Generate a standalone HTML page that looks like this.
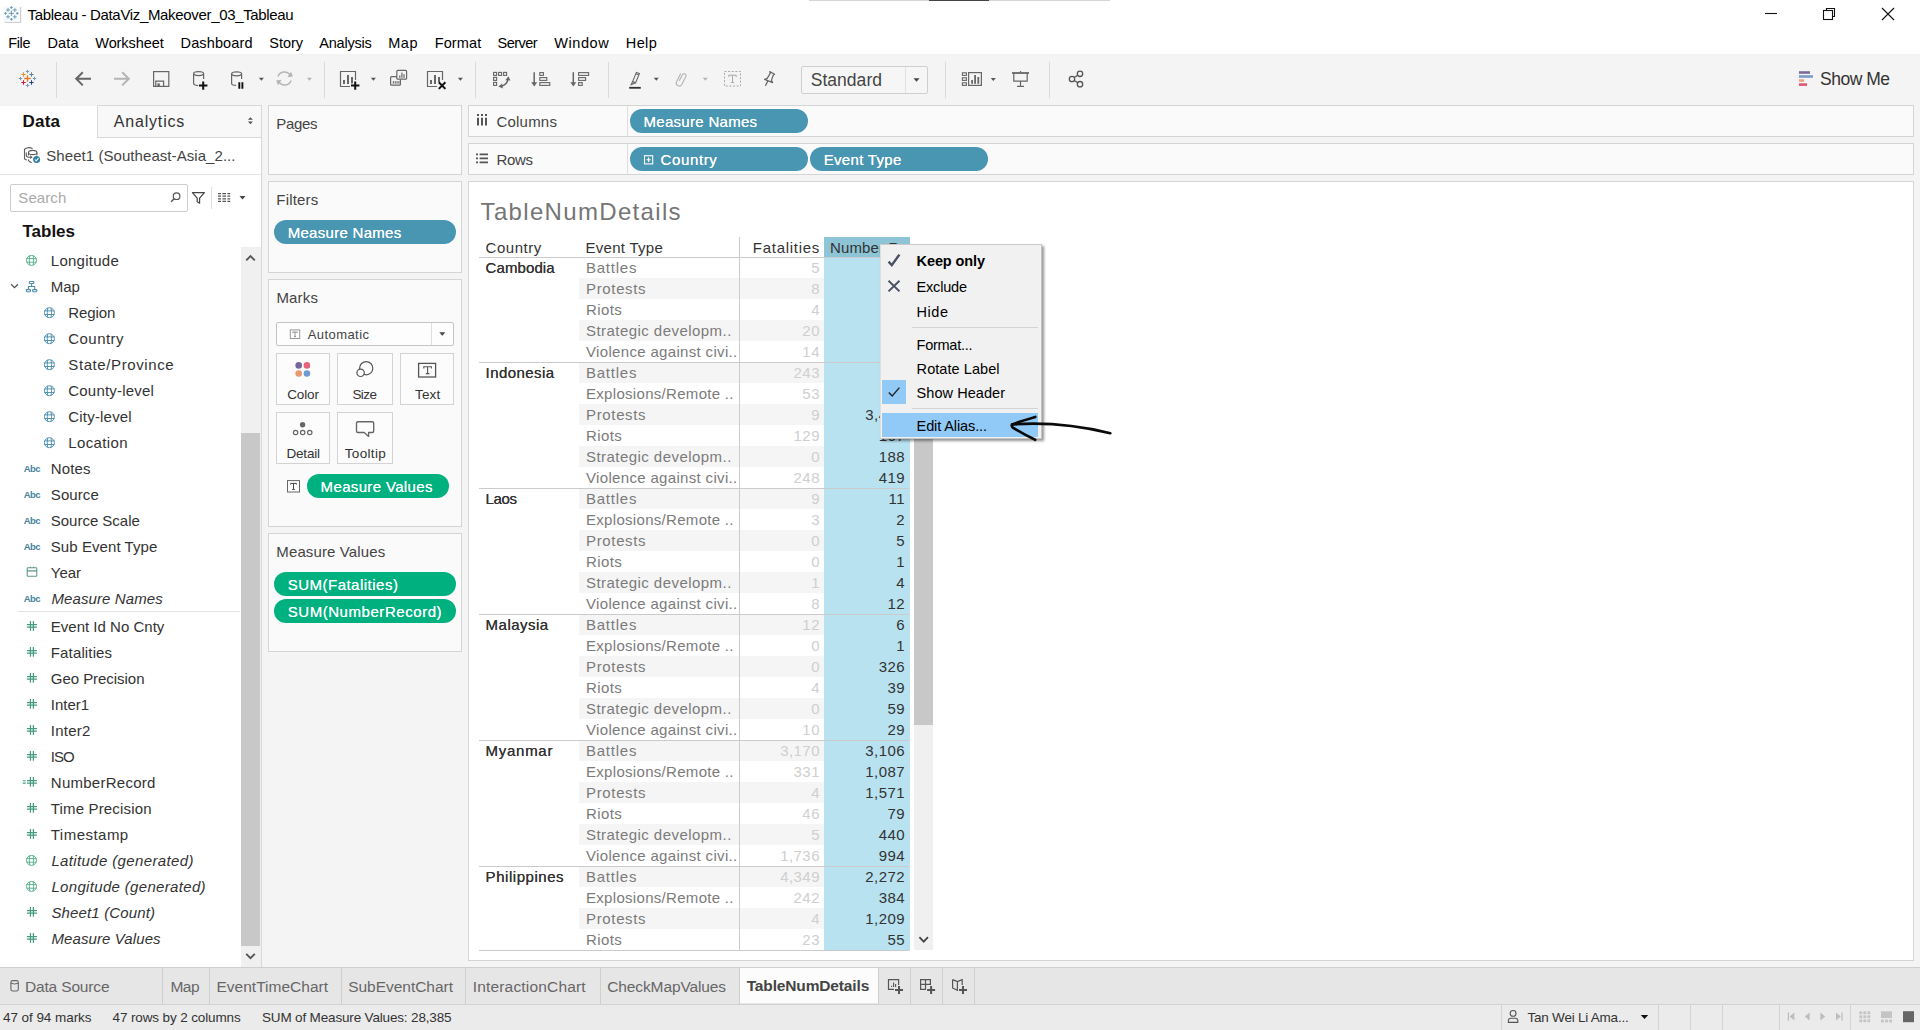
<!DOCTYPE html><html><head><meta charset="utf-8"><title>Tableau - DataViz_Makeover_03_Tableau</title><style>
*{box-sizing:border-box;margin:0;padding:0}
html,body{width:1920px;height:1030px;overflow:hidden;background:#fff}
body{font-family:"Liberation Sans",sans-serif;color:#333;position:relative;font-size:15px}
.a{position:absolute;white-space:nowrap}
.t{position:absolute;white-space:nowrap;line-height:20px;height:20px}
.card{position:absolute;background:#fafafa;border:1px solid #d4d4d4}
.pill{position:absolute;border-radius:12px}
.blue{background:#4996b2}
.green{background:#00b180}
.sep{position:absolute;width:1px;background:#dcdcdc}
svg{position:absolute;overflow:visible}
</style></head><body>
<div class="a" style="left:809px;top:0px;width:301px;height:1px;background:#d6d6d6;"></div>
<div class="a" style="left:929px;top:0px;width:60px;height:1px;background:#444;"></div>
<div class="t" style="left:27.50px;top:5px;font-size:15px;color:#000;letter-spacing:-0.334px;">Tableau - DataViz_Makeover_03_Tableau</div>
<div class="t" style="left:8.30px;top:33px;font-size:14.5px;color:#000;letter-spacing:-0.388px;">File</div>
<div class="t" style="left:47.50px;top:33px;font-size:14.5px;color:#000;letter-spacing:0.124px;">Data</div>
<div class="t" style="left:95.30px;top:33px;font-size:14.5px;color:#000;letter-spacing:-0.080px;">Worksheet</div>
<div class="t" style="left:180.60px;top:33px;font-size:14.5px;color:#000;letter-spacing:0.121px;">Dashboard</div>
<div class="t" style="left:269.30px;top:33px;font-size:14.5px;color:#000;letter-spacing:-0.036px;">Story</div>
<div class="t" style="left:319.30px;top:33px;font-size:14.5px;color:#000;letter-spacing:-0.228px;">Analysis</div>
<div class="t" style="left:388.30px;top:33px;font-size:14.5px;color:#000;letter-spacing:0.496px;">Map</div>
<div class="t" style="left:434.70px;top:33px;font-size:14.5px;color:#000;letter-spacing:0.116px;">Format</div>
<div class="t" style="left:497.50px;top:33px;font-size:14.5px;color:#000;letter-spacing:-0.541px;">Server</div>
<div class="t" style="left:554.20px;top:33px;font-size:14.5px;color:#000;letter-spacing:0.586px;">Window</div>
<div class="t" style="left:625.80px;top:33px;font-size:14.5px;color:#000;letter-spacing:0.359px;">Help</div>
<div class="a" style="left:0px;top:54px;width:1920px;height:976px;background:#f4f4f4;"></div>
<div class="a" style="left:56px;top:62px;width:1px;height:36px;background:#dadada;"></div>
<div class="a" style="left:324px;top:62px;width:1px;height:36px;background:#dadada;"></div>
<div class="a" style="left:475px;top:62px;width:1px;height:36px;background:#dadada;"></div>
<div class="a" style="left:608px;top:62px;width:1px;height:36px;background:#dadada;"></div>
<div class="a" style="left:945px;top:62px;width:1px;height:36px;background:#dadada;"></div>
<div class="a" style="left:1049px;top:62px;width:1px;height:36px;background:#dadada;"></div>
<div class="a" style="left:801px;top:66px;width:127px;height:28px;background:#f6f6f6;border:1px solid #cfcfcf;border-radius:2px;"></div>
<div class="a" style="left:905px;top:67px;width:1px;height:26px;background:#e2e2e2;"></div>
<div class="t" style="left:810.70px;top:70px;font-size:17.5px;color:#444;letter-spacing:0.039px;">Standard</div>
<div class="t" style="left:1820.00px;top:69px;font-size:17.5px;color:#333;letter-spacing:-0.491px;">Show Me</div>
<div class="a" style="left:0px;top:105.5px;width:262px;height:861.5px;background:#fff;border-right:1px solid #d8d8d8;"></div>
<div class="a" style="left:97px;top:105px;width:165px;height:33px;background:#f8f8f8;border:1px solid #d8d8d8;"></div>
<div class="t" style="left:22.50px;top:112px;font-size:17px;color:#111;font-weight:bold;letter-spacing:0.218px;">Data</div>
<div class="t" style="left:113.80px;top:112px;font-size:16px;color:#333;letter-spacing:0.810px;">Analytics</div>
<div class="t" style="left:46.30px;top:146px;font-size:15px;color:#444;letter-spacing:0.061px;">Sheet1 (Southeast-Asia_2...</div>
<div class="a" style="left:0px;top:174px;width:261px;height:1px;background:#e4e4e4;"></div>
<div class="a" style="left:10px;top:184px;width:178px;height:28px;background:#fff;border:1px solid #cdcdcd;border-radius:2px;"></div>
<div class="t" style="left:18.30px;top:188px;font-size:15px;color:#aaa;letter-spacing:0.095px;">Search</div>
<div class="a" style="left:211px;top:187px;width:1px;height:22px;background:#dedede;"></div>
<div class="t" style="left:22.50px;top:222px;font-size:17px;color:#111;font-weight:bold;letter-spacing:-0.019px;">Tables</div>
<div class="a" style="left:18px;top:611px;width:222px;height:1px;background:#e2e2e2;"></div>
<div class="t" style="left:50.80px;top:251px;font-size:15px;color:#333;letter-spacing:0.263px;">Longitude</div>
<div class="t" style="left:50.80px;top:277px;font-size:15px;color:#333;letter-spacing:-0.090px;">Map</div>
<div class="t" style="left:68.30px;top:303px;font-size:15px;color:#333;letter-spacing:-0.087px;">Region</div>
<div class="t" style="left:68.30px;top:329px;font-size:15px;color:#333;letter-spacing:0.446px;">Country</div>
<div class="t" style="left:68.30px;top:355px;font-size:15px;color:#333;letter-spacing:0.596px;">State/Province</div>
<div class="t" style="left:68.30px;top:381px;font-size:15px;color:#333;letter-spacing:0.193px;">County-level</div>
<div class="t" style="left:68.30px;top:407px;font-size:15px;color:#333;letter-spacing:0.191px;">City-level</div>
<div class="t" style="left:68.30px;top:433px;font-size:15px;color:#333;letter-spacing:0.355px;">Location</div>
<div class="t" style="left:50.80px;top:459px;font-size:15px;color:#333;letter-spacing:0.104px;">Notes</div>
<div class="t" style="left:50.80px;top:485px;font-size:15px;color:#333;letter-spacing:0.095px;">Source</div>
<div class="t" style="left:50.80px;top:511px;font-size:15px;color:#333;letter-spacing:-0.020px;">Source Scale</div>
<div class="t" style="left:50.80px;top:537px;font-size:15px;color:#333;letter-spacing:0.067px;">Sub Event Type</div>
<div class="t" style="left:50.80px;top:563px;font-size:15px;color:#333;">Year</div>
<div class="t" style="left:51.40px;top:589px;font-size:15px;color:#333;font-style:italic;letter-spacing:0.113px;">Measure Names</div>
<div class="t" style="left:50.80px;top:617px;font-size:15px;color:#333;letter-spacing:0.008px;">Event Id No Cnty</div>
<div class="t" style="left:50.80px;top:643px;font-size:15px;color:#333;letter-spacing:0.142px;">Fatalities</div>
<div class="t" style="left:50.80px;top:669px;font-size:15px;color:#333;letter-spacing:-0.043px;">Geo Precision</div>
<div class="t" style="left:50.80px;top:695px;font-size:15px;color:#333;letter-spacing:-0.031px;">Inter1</div>
<div class="t" style="left:50.80px;top:721px;font-size:15px;color:#333;letter-spacing:0.249px;">Inter2</div>
<div class="t" style="left:50.80px;top:747px;font-size:15px;color:#333;letter-spacing:-1.020px;">ISO</div>
<div class="t" style="left:50.80px;top:773px;font-size:15px;color:#333;letter-spacing:0.263px;">NumberRecord</div>
<div class="t" style="left:50.80px;top:799px;font-size:15px;color:#333;letter-spacing:0.159px;">Time Precision</div>
<div class="t" style="left:50.80px;top:825px;font-size:15px;color:#333;letter-spacing:0.472px;">Timestamp</div>
<div class="t" style="left:51.40px;top:851px;font-size:15px;color:#333;font-style:italic;letter-spacing:0.369px;">Latitude (generated)</div>
<div class="t" style="left:51.40px;top:877px;font-size:15px;color:#333;font-style:italic;letter-spacing:0.329px;">Longitude (generated)</div>
<div class="t" style="left:51.40px;top:903px;font-size:15px;color:#333;font-style:italic;letter-spacing:0.152px;">Sheet1 (Count)</div>
<div class="t" style="left:51.40px;top:929px;font-size:15px;color:#333;font-style:italic;letter-spacing:0.105px;">Measure Values</div>
<div class="a" style="left:241px;top:247px;width:20px;height:720px;background:#f0f0f0;"></div>
<div class="a" style="left:241px;top:433px;width:19px;height:513px;background:#c8c8c8;"></div>
<div class="card" style="left:268px;top:105px;width:194px;height:70px"></div>
<div class="t" style="left:276.30px;top:114px;font-size:15px;color:#444;letter-spacing:-0.308px;">Pages</div>
<div class="card" style="left:268px;top:181px;width:194px;height:92px"></div>
<div class="t" style="left:276.30px;top:190px;font-size:15px;color:#444;letter-spacing:0.195px;">Filters</div>
<div class="pill blue" style="left:274px;top:220px;width:181.8px;height:24px"></div>
<div class="t" style="left:287.70px;top:223px;font-size:15px;color:#fff;letter-spacing:0.288px;text-shadow:0 0 0.6px #fff;">Measure Names</div>
<div class="card" style="left:268px;top:279px;width:194px;height:248px"></div>
<div class="t" style="left:276.40px;top:288px;font-size:15px;color:#444;letter-spacing:0.192px;">Marks</div>
<div class="a" style="left:276px;top:322px;width:178px;height:24px;background:#fdfdfd;border:1px solid #c4c4c4;border-radius:2px;"></div>
<div class="a" style="left:431px;top:323px;width:1px;height:22px;background:#dedede;"></div>
<div class="t" style="left:307.70px;top:325px;font-size:13px;color:#444;letter-spacing:0.437px;">Automatic</div>
<div class="a" style="left:276px;top:353px;width:54px;height:52px;background:#fcfcfc;border:1px solid #d3d3d3;"></div>
<div class="t" style="left:287.20px;top:385px;font-size:13.5px;color:#333;letter-spacing:-0.115px;">Color</div>
<div class="a" style="left:337px;top:353px;width:56px;height:52px;background:#fcfcfc;border:1px solid #d3d3d3;"></div>
<div class="t" style="left:352.40px;top:385px;font-size:13.5px;color:#333;letter-spacing:-0.587px;">Size</div>
<div class="a" style="left:400px;top:353px;width:54px;height:52px;background:#fcfcfc;border:1px solid #d3d3d3;"></div>
<div class="t" style="left:415.00px;top:385px;font-size:13.5px;color:#333;letter-spacing:0.147px;">Text</div>
<div class="a" style="left:276px;top:412px;width:54px;height:52px;background:#fcfcfc;border:1px solid #d3d3d3;"></div>
<div class="t" style="left:286.50px;top:444px;font-size:13.5px;color:#333;letter-spacing:-0.203px;">Detail</div>
<div class="a" style="left:337px;top:412px;width:56px;height:52px;background:#fcfcfc;border:1px solid #d3d3d3;"></div>
<div class="t" style="left:344.80px;top:444px;font-size:13.5px;color:#333;letter-spacing:0.313px;">Tooltip</div>
<div class="pill green" style="left:307px;top:474.4px;width:142.3px;height:23.5px"></div>
<div class="t" style="left:320.60px;top:477px;font-size:15px;color:#fff;letter-spacing:0.348px;text-shadow:0 0 0.6px #fff;">Measure Values</div>
<div class="card" style="left:268px;top:533px;width:194px;height:119px"></div>
<div class="t" style="left:276.30px;top:542px;font-size:15px;color:#444;letter-spacing:0.125px;">Measure Values</div>
<div class="pill green" style="left:274px;top:572px;width:181.8px;height:24px"></div>
<div class="t" style="left:287.70px;top:575px;font-size:15px;color:#fff;letter-spacing:0.490px;text-shadow:0 0 0.6px #fff;">SUM(Fatalities)</div>
<div class="pill green" style="left:274px;top:599px;width:181.8px;height:24px"></div>
<div class="t" style="left:287.70px;top:602px;font-size:15px;color:#fff;letter-spacing:0.554px;text-shadow:0 0 0.6px #fff;">SUM(NumberRecord)</div>
<div class="card" style="left:468px;top:105px;width:1446px;height:32px"></div>
<div class="card" style="left:468px;top:143px;width:1446px;height:32px"></div>
<div class="a" style="left:627px;top:106px;width:1px;height:30px;background:#dedede;"></div>
<div class="a" style="left:627px;top:144px;width:1px;height:30px;background:#dedede;"></div>
<div class="t" style="left:496.50px;top:112px;font-size:15px;color:#444;letter-spacing:0.202px;">Columns</div>
<div class="t" style="left:496.50px;top:150px;font-size:15px;color:#444;letter-spacing:-0.369px;">Rows</div>
<div class="pill blue" style="left:630px;top:109px;width:178px;height:24px"></div>
<div class="t" style="left:643.50px;top:112px;font-size:15px;color:#fff;letter-spacing:0.297px;text-shadow:0 0 0.6px #fff;">Measure Names</div>
<div class="pill blue" style="left:630px;top:147.3px;width:178px;height:24px"></div>
<div class="t" style="left:660.60px;top:150px;font-size:15px;color:#fff;letter-spacing:0.613px;text-shadow:0 0 0.6px #fff;">Country</div>
<div class="pill blue" style="left:810px;top:147.3px;width:178px;height:24px"></div>
<div class="t" style="left:823.70px;top:150px;font-size:15px;color:#fff;letter-spacing:0.314px;text-shadow:0 0 0.6px #fff;">Event Type</div>
<div class="a" style="left:468px;top:181px;width:1446px;height:780px;background:#fff;border:1px solid #d4d4d4;"></div>
<div class="t" style="left:480.60px;top:202px;font-size:24px;color:#757575;letter-spacing:1.328px;">TableNumDetails</div>
<div class="a" style="left:824px;top:237px;width:85.6px;height:714px;background:#b9e2f1;"></div>
<div class="a" style="left:824px;top:237px;width:85.6px;height:21px;background:#8dc4d6;"></div>
<div class="t" style="left:485.60px;top:258px;font-size:15px;color:#333;letter-spacing:0.090px;text-shadow:0 0 0.2px #333;">Cambodia</div>
<div class="t" style="left:586.00px;top:258px;font-size:15px;color:#7b7b7b;letter-spacing:0.757px;">Battles</div>
<div class="t" style="right:1100.05px;top:258px;font-size:15px;color:#cfcfcf;letter-spacing:0.450px;">5</div>
<div class="a" style="left:579px;top:278.25px;width:245px;height:20.6px;background:#f5f5f5;"></div>
<div class="t" style="left:586.00px;top:279px;font-size:15px;color:#7b7b7b;letter-spacing:0.654px;">Protests</div>
<div class="t" style="right:1100.05px;top:279px;font-size:15px;color:#cfcfcf;letter-spacing:0.450px;">8</div>
<div class="t" style="left:586.00px;top:300px;font-size:15px;color:#7b7b7b;letter-spacing:0.381px;">Riots</div>
<div class="t" style="right:1100.05px;top:300px;font-size:15px;color:#cfcfcf;letter-spacing:0.450px;">4</div>
<div class="a" style="left:579px;top:320.25px;width:245px;height:20.6px;background:#f5f5f5;"></div>
<div class="t" style="left:586.00px;top:321px;font-size:15px;color:#7b7b7b;letter-spacing:0.451px;">Strategic developm..</div>
<div class="t" style="right:1100.05px;top:321px;font-size:15px;color:#cfcfcf;letter-spacing:0.450px;">20</div>
<div class="t" style="left:586.00px;top:342px;font-size:15px;color:#7b7b7b;letter-spacing:0.329px;">Violence against civi..</div>
<div class="t" style="right:1100.05px;top:342px;font-size:15px;color:#cfcfcf;letter-spacing:0.450px;">14</div>
<div class="t" style="left:485.60px;top:363px;font-size:15px;color:#333;letter-spacing:0.431px;text-shadow:0 0 0.2px #333;">Indonesia</div>
<div class="a" style="left:579px;top:362.25px;width:245px;height:20.6px;background:#f5f5f5;"></div>
<div class="t" style="left:586.00px;top:363px;font-size:15px;color:#7b7b7b;letter-spacing:0.757px;">Battles</div>
<div class="t" style="right:1100.05px;top:363px;font-size:15px;color:#cfcfcf;letter-spacing:0.450px;">243</div>
<div class="t" style="left:586.00px;top:384px;font-size:15px;color:#7b7b7b;letter-spacing:0.304px;">Explosions/Remote ..</div>
<div class="t" style="right:1100.05px;top:384px;font-size:15px;color:#cfcfcf;letter-spacing:0.450px;">53</div>
<div class="a" style="left:579px;top:404.25px;width:245px;height:20.6px;background:#f5f5f5;"></div>
<div class="t" style="left:586.00px;top:405px;font-size:15px;color:#7b7b7b;letter-spacing:0.654px;">Protests</div>
<div class="t" style="right:1100.05px;top:405px;font-size:15px;color:#cfcfcf;letter-spacing:0.450px;">9</div>
<div class="t" style="right:1014.95px;top:405px;font-size:15px;color:#333;letter-spacing:0.450px;">3,467</div>
<div class="t" style="left:586.00px;top:426px;font-size:15px;color:#7b7b7b;letter-spacing:0.381px;">Riots</div>
<div class="t" style="right:1100.05px;top:426px;font-size:15px;color:#cfcfcf;letter-spacing:0.450px;">129</div>
<div class="t" style="right:1014.95px;top:426px;font-size:15px;color:#333;letter-spacing:0.450px;">167</div>
<div class="a" style="left:579px;top:446.25px;width:245px;height:20.6px;background:#f5f5f5;"></div>
<div class="t" style="left:586.00px;top:447px;font-size:15px;color:#7b7b7b;letter-spacing:0.451px;">Strategic developm..</div>
<div class="t" style="right:1100.05px;top:447px;font-size:15px;color:#cfcfcf;letter-spacing:0.450px;">0</div>
<div class="t" style="right:1014.95px;top:447px;font-size:15px;color:#333;letter-spacing:0.450px;">188</div>
<div class="t" style="left:586.00px;top:468px;font-size:15px;color:#7b7b7b;letter-spacing:0.329px;">Violence against civi..</div>
<div class="t" style="right:1100.05px;top:468px;font-size:15px;color:#cfcfcf;letter-spacing:0.450px;">248</div>
<div class="t" style="right:1014.95px;top:468px;font-size:15px;color:#333;letter-spacing:0.450px;">419</div>
<div class="t" style="left:485.60px;top:489px;font-size:15px;color:#333;letter-spacing:-0.342px;text-shadow:0 0 0.2px #333;">Laos</div>
<div class="a" style="left:579px;top:488.25px;width:245px;height:20.6px;background:#f5f5f5;"></div>
<div class="t" style="left:586.00px;top:489px;font-size:15px;color:#7b7b7b;letter-spacing:0.757px;">Battles</div>
<div class="t" style="right:1100.05px;top:489px;font-size:15px;color:#cfcfcf;letter-spacing:0.450px;">9</div>
<div class="t" style="right:1014.95px;top:489px;font-size:15px;color:#333;letter-spacing:0.450px;">11</div>
<div class="t" style="left:586.00px;top:510px;font-size:15px;color:#7b7b7b;letter-spacing:0.304px;">Explosions/Remote ..</div>
<div class="t" style="right:1100.05px;top:510px;font-size:15px;color:#cfcfcf;letter-spacing:0.450px;">3</div>
<div class="t" style="right:1014.95px;top:510px;font-size:15px;color:#333;letter-spacing:0.450px;">2</div>
<div class="a" style="left:579px;top:530.25px;width:245px;height:20.6px;background:#f5f5f5;"></div>
<div class="t" style="left:586.00px;top:531px;font-size:15px;color:#7b7b7b;letter-spacing:0.654px;">Protests</div>
<div class="t" style="right:1100.05px;top:531px;font-size:15px;color:#cfcfcf;letter-spacing:0.450px;">0</div>
<div class="t" style="right:1014.95px;top:531px;font-size:15px;color:#333;letter-spacing:0.450px;">5</div>
<div class="t" style="left:586.00px;top:552px;font-size:15px;color:#7b7b7b;letter-spacing:0.381px;">Riots</div>
<div class="t" style="right:1100.05px;top:552px;font-size:15px;color:#cfcfcf;letter-spacing:0.450px;">0</div>
<div class="t" style="right:1014.95px;top:552px;font-size:15px;color:#333;letter-spacing:0.450px;">1</div>
<div class="a" style="left:579px;top:572.25px;width:245px;height:20.6px;background:#f5f5f5;"></div>
<div class="t" style="left:586.00px;top:573px;font-size:15px;color:#7b7b7b;letter-spacing:0.451px;">Strategic developm..</div>
<div class="t" style="right:1100.05px;top:573px;font-size:15px;color:#cfcfcf;letter-spacing:0.450px;">1</div>
<div class="t" style="right:1014.95px;top:573px;font-size:15px;color:#333;letter-spacing:0.450px;">4</div>
<div class="t" style="left:586.00px;top:594px;font-size:15px;color:#7b7b7b;letter-spacing:0.329px;">Violence against civi..</div>
<div class="t" style="right:1100.05px;top:594px;font-size:15px;color:#cfcfcf;letter-spacing:0.450px;">8</div>
<div class="t" style="right:1014.95px;top:594px;font-size:15px;color:#333;letter-spacing:0.450px;">12</div>
<div class="t" style="left:485.60px;top:615px;font-size:15px;color:#333;letter-spacing:0.473px;text-shadow:0 0 0.2px #333;">Malaysia</div>
<div class="a" style="left:579px;top:614.25px;width:245px;height:20.6px;background:#f5f5f5;"></div>
<div class="t" style="left:586.00px;top:615px;font-size:15px;color:#7b7b7b;letter-spacing:0.757px;">Battles</div>
<div class="t" style="right:1100.05px;top:615px;font-size:15px;color:#cfcfcf;letter-spacing:0.450px;">12</div>
<div class="t" style="right:1014.95px;top:615px;font-size:15px;color:#333;letter-spacing:0.450px;">6</div>
<div class="t" style="left:586.00px;top:636px;font-size:15px;color:#7b7b7b;letter-spacing:0.304px;">Explosions/Remote ..</div>
<div class="t" style="right:1100.05px;top:636px;font-size:15px;color:#cfcfcf;letter-spacing:0.450px;">0</div>
<div class="t" style="right:1014.95px;top:636px;font-size:15px;color:#333;letter-spacing:0.450px;">1</div>
<div class="a" style="left:579px;top:656.25px;width:245px;height:20.6px;background:#f5f5f5;"></div>
<div class="t" style="left:586.00px;top:657px;font-size:15px;color:#7b7b7b;letter-spacing:0.654px;">Protests</div>
<div class="t" style="right:1100.05px;top:657px;font-size:15px;color:#cfcfcf;letter-spacing:0.450px;">0</div>
<div class="t" style="right:1014.95px;top:657px;font-size:15px;color:#333;letter-spacing:0.450px;">326</div>
<div class="t" style="left:586.00px;top:678px;font-size:15px;color:#7b7b7b;letter-spacing:0.381px;">Riots</div>
<div class="t" style="right:1100.05px;top:678px;font-size:15px;color:#cfcfcf;letter-spacing:0.450px;">4</div>
<div class="t" style="right:1014.95px;top:678px;font-size:15px;color:#333;letter-spacing:0.450px;">39</div>
<div class="a" style="left:579px;top:698.25px;width:245px;height:20.6px;background:#f5f5f5;"></div>
<div class="t" style="left:586.00px;top:699px;font-size:15px;color:#7b7b7b;letter-spacing:0.451px;">Strategic developm..</div>
<div class="t" style="right:1100.05px;top:699px;font-size:15px;color:#cfcfcf;letter-spacing:0.450px;">0</div>
<div class="t" style="right:1014.95px;top:699px;font-size:15px;color:#333;letter-spacing:0.450px;">59</div>
<div class="t" style="left:586.00px;top:720px;font-size:15px;color:#7b7b7b;letter-spacing:0.329px;">Violence against civi..</div>
<div class="t" style="right:1100.05px;top:720px;font-size:15px;color:#cfcfcf;letter-spacing:0.450px;">10</div>
<div class="t" style="right:1014.95px;top:720px;font-size:15px;color:#333;letter-spacing:0.450px;">29</div>
<div class="t" style="left:485.60px;top:741px;font-size:15px;color:#333;letter-spacing:0.715px;text-shadow:0 0 0.2px #333;">Myanmar</div>
<div class="a" style="left:579px;top:740.25px;width:245px;height:20.6px;background:#f5f5f5;"></div>
<div class="t" style="left:586.00px;top:741px;font-size:15px;color:#7b7b7b;letter-spacing:0.757px;">Battles</div>
<div class="t" style="right:1100.05px;top:741px;font-size:15px;color:#cfcfcf;letter-spacing:0.450px;">3,170</div>
<div class="t" style="right:1014.95px;top:741px;font-size:15px;color:#333;letter-spacing:0.450px;">3,106</div>
<div class="t" style="left:586.00px;top:762px;font-size:15px;color:#7b7b7b;letter-spacing:0.304px;">Explosions/Remote ..</div>
<div class="t" style="right:1100.05px;top:762px;font-size:15px;color:#cfcfcf;letter-spacing:0.450px;">331</div>
<div class="t" style="right:1014.95px;top:762px;font-size:15px;color:#333;letter-spacing:0.450px;">1,087</div>
<div class="a" style="left:579px;top:782.25px;width:245px;height:20.6px;background:#f5f5f5;"></div>
<div class="t" style="left:586.00px;top:783px;font-size:15px;color:#7b7b7b;letter-spacing:0.654px;">Protests</div>
<div class="t" style="right:1100.05px;top:783px;font-size:15px;color:#cfcfcf;letter-spacing:0.450px;">4</div>
<div class="t" style="right:1014.95px;top:783px;font-size:15px;color:#333;letter-spacing:0.450px;">1,571</div>
<div class="t" style="left:586.00px;top:804px;font-size:15px;color:#7b7b7b;letter-spacing:0.381px;">Riots</div>
<div class="t" style="right:1100.05px;top:804px;font-size:15px;color:#cfcfcf;letter-spacing:0.450px;">46</div>
<div class="t" style="right:1014.95px;top:804px;font-size:15px;color:#333;letter-spacing:0.450px;">79</div>
<div class="a" style="left:579px;top:824.25px;width:245px;height:20.6px;background:#f5f5f5;"></div>
<div class="t" style="left:586.00px;top:825px;font-size:15px;color:#7b7b7b;letter-spacing:0.451px;">Strategic developm..</div>
<div class="t" style="right:1100.05px;top:825px;font-size:15px;color:#cfcfcf;letter-spacing:0.450px;">5</div>
<div class="t" style="right:1014.95px;top:825px;font-size:15px;color:#333;letter-spacing:0.450px;">440</div>
<div class="t" style="left:586.00px;top:846px;font-size:15px;color:#7b7b7b;letter-spacing:0.329px;">Violence against civi..</div>
<div class="t" style="right:1100.05px;top:846px;font-size:15px;color:#cfcfcf;letter-spacing:0.450px;">1,736</div>
<div class="t" style="right:1014.95px;top:846px;font-size:15px;color:#333;letter-spacing:0.450px;">994</div>
<div class="t" style="left:485.60px;top:867px;font-size:15px;color:#333;letter-spacing:0.545px;text-shadow:0 0 0.2px #333;">Philippines</div>
<div class="a" style="left:579px;top:866.25px;width:245px;height:20.6px;background:#f5f5f5;"></div>
<div class="t" style="left:586.00px;top:867px;font-size:15px;color:#7b7b7b;letter-spacing:0.757px;">Battles</div>
<div class="t" style="right:1100.05px;top:867px;font-size:15px;color:#cfcfcf;letter-spacing:0.450px;">4,349</div>
<div class="t" style="right:1014.95px;top:867px;font-size:15px;color:#333;letter-spacing:0.450px;">2,272</div>
<div class="t" style="left:586.00px;top:888px;font-size:15px;color:#7b7b7b;letter-spacing:0.304px;">Explosions/Remote ..</div>
<div class="t" style="right:1100.05px;top:888px;font-size:15px;color:#cfcfcf;letter-spacing:0.450px;">242</div>
<div class="t" style="right:1014.95px;top:888px;font-size:15px;color:#333;letter-spacing:0.450px;">384</div>
<div class="a" style="left:579px;top:908.25px;width:245px;height:20.6px;background:#f5f5f5;"></div>
<div class="t" style="left:586.00px;top:909px;font-size:15px;color:#7b7b7b;letter-spacing:0.654px;">Protests</div>
<div class="t" style="right:1100.05px;top:909px;font-size:15px;color:#cfcfcf;letter-spacing:0.450px;">4</div>
<div class="t" style="right:1014.95px;top:909px;font-size:15px;color:#333;letter-spacing:0.450px;">1,209</div>
<div class="t" style="left:586.00px;top:930px;font-size:15px;color:#7b7b7b;letter-spacing:0.381px;">Riots</div>
<div class="t" style="right:1100.05px;top:930px;font-size:15px;color:#cfcfcf;letter-spacing:0.450px;">23</div>
<div class="t" style="right:1014.95px;top:930px;font-size:15px;color:#333;letter-spacing:0.450px;">55</div>
<div class="a" style="left:479px;top:257px;width:430px;height:1px;background:#cbcbcb;"></div>
<div class="a" style="left:479px;top:362px;width:430px;height:1px;background:#cbcbcb;"></div>
<div class="a" style="left:479px;top:488px;width:430px;height:1px;background:#cbcbcb;"></div>
<div class="a" style="left:479px;top:614px;width:430px;height:1px;background:#cbcbcb;"></div>
<div class="a" style="left:479px;top:740px;width:430px;height:1px;background:#cbcbcb;"></div>
<div class="a" style="left:479px;top:866px;width:430px;height:1px;background:#cbcbcb;"></div>
<div class="a" style="left:479px;top:950px;width:430px;height:1px;background:#cbcbcb;"></div>
<div class="a" style="left:739px;top:237px;width:1px;height:714px;background:#cccccc;"></div>
<div class="t" style="left:485.60px;top:238px;font-size:15px;color:#333;letter-spacing:0.530px;">Country</div>
<div class="t" style="left:585.50px;top:238px;font-size:15px;color:#333;letter-spacing:0.281px;">Event Type</div>
<div class="t" style="left:752.80px;top:238px;font-size:15px;color:#333;letter-spacing:0.720px;">Fatalities</div>
<div class="t" style="left:830.00px;top:238px;font-size:15px;color:#333;letter-spacing:0.150px;">Number R..</div>
<div class="a" style="left:914px;top:258px;width:19px;height:692px;background:#f0f0f0;"></div>
<div class="a" style="left:914px;top:275px;width:19px;height:450px;background:#c8c8c8;"></div>
<div class="a" style="left:879.5px;top:244.4px;width:162px;height:195px;background:#f1f1f1;border:1px solid;border-color:#cbcbcb #c4c4c4 #c4c4c4 #dedede;box-shadow:2px 2px 2.5px rgba(0,0,0,.42);"></div>
<div class="a" style="left:882px;top:380px;width:24px;height:24px;background:#91c9f7;"></div>
<div class="a" style="left:882px;top:413px;width:156px;height:24px;background:#91c9f7;"></div>
<div class="a" style="left:912px;top:327px;width:126px;height:1px;background:#d4d4d4;"></div>
<div class="a" style="left:912px;top:408px;width:126px;height:1px;background:#d4d4d4;"></div>
<div class="t" style="left:916.60px;top:251px;font-size:14.5px;color:#000;font-weight:bold;letter-spacing:-0.112px;">Keep only</div>
<div class="t" style="left:916.60px;top:277px;font-size:14.5px;color:#000;letter-spacing:-0.198px;">Exclude</div>
<div class="t" style="left:916.60px;top:302px;font-size:14.5px;color:#000;letter-spacing:0.526px;">Hide</div>
<div class="t" style="left:916.60px;top:335px;font-size:14.5px;color:#000;letter-spacing:-0.263px;">Format...</div>
<div class="t" style="left:916.60px;top:359px;font-size:14.5px;color:#000;letter-spacing:0.061px;">Rotate Label</div>
<div class="t" style="left:916.60px;top:383px;font-size:14.5px;color:#000;letter-spacing:0.054px;">Show Header</div>
<div class="t" style="left:916.60px;top:416px;font-size:14.5px;color:#000;letter-spacing:-0.111px;">Edit Alias...</div>
<div class="a" style="left:0px;top:967px;width:1920px;height:38px;background:#e6e6e6;border-top:1px solid #cfcfcf;border-bottom:1px solid #d2d2d2;"></div>
<div class="a" style="left:0px;top:1005px;width:1920px;height:25px;background:#ebebeb;"></div>
<div class="a" style="left:740px;top:968px;width:139px;height:35px;background:#fcfcfc;"></div>
<div class="a" style="left:162px;top:968px;width:1px;height:36px;background:#cfcfcf;"></div>
<div class="a" style="left:209px;top:968px;width:1px;height:36px;background:#cfcfcf;"></div>
<div class="a" style="left:341px;top:968px;width:1px;height:36px;background:#cfcfcf;"></div>
<div class="a" style="left:465px;top:968px;width:1px;height:36px;background:#cfcfcf;"></div>
<div class="a" style="left:600px;top:968px;width:1px;height:36px;background:#cfcfcf;"></div>
<div class="a" style="left:739px;top:968px;width:1px;height:36px;background:#cfcfcf;"></div>
<div class="a" style="left:878px;top:968px;width:1px;height:36px;background:#cfcfcf;"></div>
<div class="a" style="left:910px;top:968px;width:1px;height:36px;background:#cfcfcf;"></div>
<div class="a" style="left:942px;top:968px;width:1px;height:36px;background:#cfcfcf;"></div>
<div class="a" style="left:974px;top:968px;width:1px;height:36px;background:#cfcfcf;"></div>
<div class="t" style="left:25.00px;top:977px;font-size:15.5px;color:#666;letter-spacing:-0.166px;">Data Source</div>
<div class="t" style="left:170.50px;top:977px;font-size:15.5px;color:#666;letter-spacing:-0.576px;">Map</div>
<div class="t" style="left:216.50px;top:977px;font-size:15.5px;color:#666;letter-spacing:0.007px;">EventTimeChart</div>
<div class="t" style="left:348.20px;top:977px;font-size:15.5px;color:#666;letter-spacing:-0.026px;">SubEventChart</div>
<div class="t" style="left:472.70px;top:977px;font-size:15.5px;color:#666;letter-spacing:0.181px;">InteractionChart</div>
<div class="t" style="left:607.30px;top:977px;font-size:15.5px;color:#666;letter-spacing:-0.125px;">CheckMapValues</div>
<div class="t" style="left:746.70px;top:976px;font-size:15.5px;color:#444;font-weight:bold;letter-spacing:-0.143px;">TableNumDetails</div>
<div class="t" style="left:3.00px;top:1008px;font-size:13.5px;color:#333;letter-spacing:-0.061px;">47 of 94 marks</div>
<div class="t" style="left:112.50px;top:1008px;font-size:13.5px;color:#333;letter-spacing:-0.124px;">47 rows by 2 columns</div>
<div class="t" style="left:262.00px;top:1008px;font-size:13.5px;color:#333;letter-spacing:-0.164px;">SUM of Measure Values: 28,385</div>
<div class="a" style="left:1501px;top:1005px;width:1px;height:25px;background:#d4d4d4;"></div>
<div class="a" style="left:1658px;top:1005px;width:1px;height:25px;background:#d4d4d4;"></div>
<div class="a" style="left:1690px;top:1005px;width:1px;height:25px;background:#d4d4d4;"></div>
<div class="a" style="left:1722px;top:1005px;width:1px;height:25px;background:#d4d4d4;"></div>
<div class="a" style="left:1779px;top:1005px;width:1px;height:25px;background:#d4d4d4;"></div>
<div class="a" style="left:1850px;top:1005px;width:1px;height:25px;background:#d4d4d4;"></div>
<div class="t" style="left:1527.50px;top:1008px;font-size:13.5px;color:#333;letter-spacing:-0.225px;">Tan Wei Li Ama...</div>
<svg width="1920" height="1030" viewBox="0 0 1920 1030" style="left:0;top:0" fill="none" stroke-linecap="butt">
<g stroke="#111" stroke-width="1.1">
<path d="M1765 13.5H1777"/>
<rect x="1823.5" y="10.5" width="9" height="9"/><path d="M1826.5 10.5V8.5H1834.5V16.5H1832.5"/>
<path d="M1882 8L1894 20M1894 8L1882 20"/>
</g>
<rect x="4.6" y="7" width="16.6" height="16" fill="#cfcfcf"/><rect x="3.4" y="5.9" width="16.6" height="16" fill="#f6fafd"/>
<path d="M8.8 13.4H14.0M11.4 10.8V16.0" stroke="#5f8fb0" stroke-width="0.9"/>
<path d="M10.1 7.5H12.700000000000001M11.4 6.2V8.8" stroke="#5f8fb0" stroke-width="0.9"/>
<path d="M10.1 19.3H12.700000000000001M11.4 18.0V20.6" stroke="#5f8fb0" stroke-width="0.9"/>
<path d="M4.2 13.4H6.8M5.5 12.1V14.700000000000001" stroke="#5f8fb0" stroke-width="0.9"/>
<path d="M16.0 13.4H18.6M17.3 12.1V14.700000000000001" stroke="#5f8fb0" stroke-width="0.9"/>
<path d="M6.1 10.0H9.9M8.0 8.1V11.9" stroke="#5f8fb0" stroke-width="0.85"/>
<path d="M12.9 10.0H16.7M14.8 8.1V11.9" stroke="#5f8fb0" stroke-width="0.85"/>
<path d="M6.1 16.8H9.9M8.0 14.9V18.7" stroke="#5f8fb0" stroke-width="0.85"/>
<path d="M12.9 16.8H16.7M14.8 14.9V18.7" stroke="#5f8fb0" stroke-width="0.85"/>
<path d="M24.2 78.5H30.8M27.5 75.2V81.8" stroke="#e8762d" stroke-width="1.3"/>
<path d="M25.8 71.5H29.2M27.5 69.8V73.2" stroke="#7a9bb5" stroke-width="1.0"/>
<path d="M25.8 85.5H29.2M27.5 83.8V87.2" stroke="#7a9bb5" stroke-width="1.0"/>
<path d="M18.8 78.5H22.2M20.5 76.8V80.2" stroke="#7a9bb5" stroke-width="1.0"/>
<path d="M32.8 78.5H36.2M34.5 76.8V80.2" stroke="#7a9bb5" stroke-width="1.0"/>
<path d="M21.3 74.5H25.7M23.5 72.3V76.7" stroke="#eb9130" stroke-width="1.1"/>
<path d="M29.3 74.5H33.7M31.5 72.3V76.7" stroke="#59879b" stroke-width="1.1"/>
<path d="M21.3 82.5H25.7M23.5 80.3V84.7" stroke="#c72037" stroke-width="1.1"/>
<path d="M29.3 82.5H33.7M31.5 80.3V84.7" stroke="#1f457e" stroke-width="1.1"/>
<path d="M91 78.8H76.5M82.8 72.3L76.2 78.8L82.8 85.4" stroke="#666" stroke-width="2" stroke-linejoin="miter"/>
<path d="M114 78.8H128.5M122.2 72.3L128.8 78.8L122.2 85.4" stroke="#b4b4b4" stroke-width="2"/>
<g stroke="#666" stroke-width="1.2"><rect x="153.6" y="71.6" width="15.2" height="14.8"/><path d="M155.8 86.4V81.2H163.6V86.4"/><rect x="157.4" y="83.4" width="2.4" height="2.6" fill="#666" stroke="none"/></g>
<ellipse cx="198.6" cy="73.6" rx="5.0" ry="2" stroke="#666" stroke-width="1.2"/>
<path d="M193.6 73.6V83.6A5.0 2 0 0 0 198.1 85.6M203.6 73.6V79" stroke="#666" stroke-width="1.2"/>
<path d="M199 85.6H207.4M203.2 81.4V89.8" stroke="#111" stroke-width="2"/>
<ellipse cx="236.6" cy="73.8" rx="5.0" ry="2" stroke="#666" stroke-width="1.2"/>
<path d="M231.6 73.8V83.4A5.0 2 0 0 0 236.1 85.4M241.6 73.8V79" stroke="#666" stroke-width="1.2"/>
<path d="M239.3 82.2V88.8M242.4 82.2V88.8" stroke="#111" stroke-width="1.9"/>
<path d="M258.9 77.8H263.9L261.4 80.8Z" fill="#555" stroke="none"/>
<g stroke="#b4b4b4" stroke-width="1.4"><path d="M277.9 76.6A6.8 6.8 0 0 1 290.2 75.4"/><path d="M291.1 80.4A6.8 6.8 0 0 1 278.8 81.6"/></g>
<path d="M287.4 77.2L292.8 76.4L291 71.8Z" fill="#b4b4b4"/><path d="M281.6 79.8L276.2 80.6L278 85.2Z" fill="#b4b4b4"/>
<path d="M306.9 77.8H311.9L309.4 80.8Z" fill="#b4b4b4" stroke="none"/>
<path d="M350 86.5H340.5V71.5H355.5V80" stroke="#666" stroke-width="1.2"/>
<g fill="#666"><rect x="343" y="80" width="2" height="4"/><rect x="347" y="75" width="2" height="9"/><rect x="351" y="77" width="2" height="6.5"/></g>
<path d="M351 85.6H359.4M355.2 81.4V89.8" stroke="#111" stroke-width="2"/>
<path d="M370.9 77.8H375.9L373.4 80.8Z" fill="#555" stroke="none"/>
<g stroke="#666" stroke-width="1.2"><rect x="390.6" y="76.6" width="9.8" height="8.6" rx="1"/><rect x="396.8" y="70.4" width="9.8" height="8.8" rx="1" fill="#f4f4f4"/></g>
<g fill="#666"><rect x="392.8" y="81.2" width="1.1" height="2.4"/><rect x="394.7" y="81.2" width="1.1" height="2.4"/><rect x="396.5" y="81.2" width="1.1" height="2.4"/><rect x="398.3" y="81.2" width="1.1" height="2.4"/><rect x="399.2" y="75.4" width="1.2" height="2.4"/><rect x="401.3" y="72.6" width="1.2" height="5.2"/><rect x="403.4" y="74.2" width="1.2" height="3.6"/></g>
<path d="M437 86.5H427.5V71.5H442.5V80" stroke="#666" stroke-width="1.2"/>
<g fill="#666"><rect x="430" y="80" width="2" height="4"/><rect x="434" y="75" width="2" height="9"/><rect x="438" y="77" width="2" height="5"/></g>
<path d="M438.8 82.3L445.4 88.9M445.4 82.3L438.8 88.9" stroke="#111" stroke-width="2"/>
<path d="M457.9 77.8H462.9L460.4 80.8Z" fill="#555" stroke="none"/>
<g stroke="#666" stroke-width="1.1">
<rect x="493.6" y="72.4" width="3" height="3"/>
<rect x="498.6" y="72.4" width="3" height="3"/>
<rect x="503.6" y="72.4" width="3" height="3"/>
<rect x="493.6" y="77.4" width="3" height="3"/>
<rect x="493.6" y="82.4" width="3" height="3"/>
<path d="M508 78.6Q507.5 85 500.6 86.4" stroke-width="1.4"/></g>
<path d="M505.4 80.3L508.4 76.2L510.4 80.6Z" fill="#666"/><path d="M502.2 83.6L498.4 86.6L502.8 88.4Z" fill="#666"/>
<path d="M534.2 72.2V84" stroke="#666" stroke-width="1.5"/><path d="M531.2 82.2H537.2L534.2 86.6Z" fill="#666"/>
<g stroke="#666" stroke-width="1.1"><rect x="539.8" y="72.6" width="3.6" height="2.8"/><rect x="539.8" y="77.6" width="7" height="2.8"/><rect x="539.8" y="82.6" width="10" height="2.8"/></g>
<path d="M573.3 72.2V84" stroke="#666" stroke-width="1.5"/><path d="M570.3 82.2H576.3L573.3 86.6Z" fill="#666"/>
<g stroke="#666" stroke-width="1.1"><rect x="578.6" y="72.6" width="10" height="2.8"/><rect x="578.6" y="77.6" width="7" height="2.8"/><rect x="578.6" y="82.6" width="3.6" height="2.8"/></g>
<path d="M629.2 87.8H640.8" stroke="#333" stroke-width="1.8"/>
<path d="M632.6 81.6L636.4 72.4L639.4 73.6L635.6 82.8Z" stroke="#666" stroke-width="1.1"/><path d="M632.6 81.6L631.2 84.6L635.6 82.8" stroke="#666" stroke-width="1.1"/><path d="M635.9 73.8L638.9 75" stroke="#666" stroke-width="1"/>
<path d="M653.8 77.8H658.8L656.3 80.8Z" fill="#555" stroke="none"/>
<path d="M679.4 80.6L682.6 74.6A1.9 1.9 0 0 1 686 76.2L681.8 84.4A2.9 2.9 0 0 1 676.6 81.8L680.6 73.8" stroke="#b4b4b4" stroke-width="1.1" stroke-linecap="round"/>
<path d="M702.8 77.8H707.8L705.3 80.8Z" fill="#b4b4b4" stroke="none"/>
<rect x="724.5" y="71.5" width="16" height="14.5" stroke="#a9a9a9" stroke-width="1" stroke-dasharray="2 1.6"/>
<path d="M728.8 77V75.2H736.2V77M732.5 75.2V82.6M730.8 82.6H734.2" stroke="#a9a9a9" stroke-width="1"/>
<path d="M769.8 71.6L774.6 74.2L773.2 75.2L771.4 80.4L772.6 82.6L764.6 79.4L767.2 78.4L770.2 73.4Z" stroke="#666" stroke-width="1.2" stroke-linejoin="round"/><path d="M767.8 81L765.4 85.8" stroke="#666" stroke-width="1.3"/>
<path d="M913.5 78.25H919.5L916.5 81.75Z" fill="#444" stroke="none"/>
<g stroke="#666" stroke-width="1.1"><rect x="962.4" y="72.8" width="4" height="2.6"/><rect x="962.4" y="77.8" width="4" height="2.6"/><rect x="962.4" y="82.8" width="4" height="2.6"/><rect x="968.6" y="72.6" width="12.8" height="12.8" stroke-width="1.2"/></g>
<g fill="#666"><rect x="971.2" y="80" width="1.8" height="3.8"/><rect x="974.2" y="75" width="1.8" height="8.8"/><rect x="977.4" y="77" width="1.8" height="6.8"/></g>
<path d="M990.8 78.1H995.8L993.3 81.1Z" fill="#555" stroke="none"/>
<path d="M1012 73H1029" stroke="#666" stroke-width="1.8"/><path d="M1013.8 73.5V81.2H1027.2V73.5M1020.5 81.2V86.2M1017 86.4H1024M1020.5 71V72.2" stroke="#666" stroke-width="1.2"/>
<g stroke="#555" stroke-width="1.3"><circle cx="1080" cy="73.8" r="2.7"/><circle cx="1072" cy="79" r="2.7"/><circle cx="1080" cy="84.2" r="2.7"/><path d="M1074.3 77.5L1077.7 75.3M1074.3 80.5L1077.7 82.7"/></g>
<rect x="1799" y="71.2" width="11" height="2.6" fill="#7b6b9b"/><rect x="1799" y="75.2" width="14" height="2.6" fill="#7a9cc9"/><rect x="1799" y="79.3" width="5" height="2.5" fill="#e8a27c"/><rect x="1799" y="83.3" width="8" height="2.6" fill="#e0566f"/>
<path d="M247.9 119.8L250.4 117.2L252.9 119.8ZM247.9 121.6L250.4 124.2L252.9 121.6Z" fill="#555"/>
<g stroke="#5c5c5c" stroke-width="1.1"><path d="M32.6 148.5Q28.4 146.4 24.5 149.2V158.4Q25 159.5 26.7 159.9"/><ellipse cx="32.7" cy="152.5" rx="4.2" ry="2.1"/><path d="M28.5 152.5V155.4M36.9 152.5V155.6M28.5 159.6V160.6Q29.4 162.2 31.7 162.6M26.3 152.6V155Q26.3 157.2 28.6 157.2H30.8"/></g>
<path d="M30.2 155.3L32.6 157.2L30.2 159.1Z" fill="#5c5c5c"/>
<circle cx="36.6" cy="159.5" r="3.5" fill="#2e7fa6"/><path d="M34.9 159.5L36.2 160.9L38.5 158.1" stroke="#fff" stroke-width="1.1"/>
<circle cx="176.6" cy="196.2" r="3.3" stroke="#555" stroke-width="1.2"/><path d="M174.3 198.6L171.2 201.8" stroke="#555" stroke-width="1.4"/>
<path d="M192.4 192.6H204.4L199.6 198.2V203.2L197.2 201.8V198.2Z" stroke="#444" stroke-width="1.2" stroke-linejoin="round"/>
<path d="M218 193.6H221M222.4 193.6H226M227.4 193.6H230.2" stroke="#555" stroke-width="1.2"/>
<path d="M218 196.2H221M222.4 196.2H226M227.4 196.2H230.2" stroke="#555" stroke-width="1.2"/>
<path d="M218 198.8H221M222.4 198.8H226M227.4 198.8H230.2" stroke="#555" stroke-width="1.2"/>
<path d="M218 201.4H221M222.4 201.4H226M227.4 201.4H230.2" stroke="#555" stroke-width="1.2"/>
<path d="M239.5 196.05H245.5L242.5 199.55Z" fill="#444" stroke="none"/>
<path d="M246.2 260.4L250.5 256L254.8 260.4" stroke="#555" stroke-width="1.9"/>
<path d="M246.2 953.8L250.5 958.2L254.8 953.8" stroke="#555" stroke-width="1.9"/>
<path d="M919.4 937.2L923.7 941.6L928 937.2" stroke="#444" stroke-width="1.8"/>
<path d="M11.1 284.3L14.5 287.6L17.9 284.3" stroke="#555" stroke-width="1.3"/>
<g stroke="#5ab18c" stroke-width="0.95"><circle cx="31.5" cy="260.4" r="5"/><path d="M26.5 258.59999999999997H36.5M26.5 262.2H36.5"/><path d="M29.8 255.59999999999997Q28.9 260.4 29.8 265.2M33.2 255.59999999999997Q34.1 260.4 33.2 265.2"/></g>
<g stroke="#4e8aa8" stroke-width="1.05"><rect x="29.4" y="281.4" width="4.4" height="2.1" rx="0.6"/><rect x="26.3" y="289.6" width="4.2" height="2.1" rx="0.6"/><rect x="32.6" y="289.6" width="4.2" height="2.1" rx="0.6"/><path d="M31.6 283.5V286.5M28.4 289.6V286.5H34.7V289.6"/></g>
<g stroke="#4e8fae" stroke-width="0.95"><circle cx="49.4" cy="312.7" r="5"/><path d="M44.4 310.9H54.4M44.4 314.5H54.4"/><path d="M47.699999999999996 307.9Q46.8 312.7 47.699999999999996 317.5M51.1 307.9Q52.0 312.7 51.1 317.5"/></g>
<g stroke="#4e8fae" stroke-width="0.95"><circle cx="49.4" cy="338.7" r="5"/><path d="M44.4 336.9H54.4M44.4 340.5H54.4"/><path d="M47.699999999999996 333.9Q46.8 338.7 47.699999999999996 343.5M51.1 333.9Q52.0 338.7 51.1 343.5"/></g>
<g stroke="#4e8fae" stroke-width="0.95"><circle cx="49.4" cy="364.7" r="5"/><path d="M44.4 362.9H54.4M44.4 366.5H54.4"/><path d="M47.699999999999996 359.9Q46.8 364.7 47.699999999999996 369.5M51.1 359.9Q52.0 364.7 51.1 369.5"/></g>
<g stroke="#4e8fae" stroke-width="0.95"><circle cx="49.4" cy="390.7" r="5"/><path d="M44.4 388.9H54.4M44.4 392.5H54.4"/><path d="M47.699999999999996 385.9Q46.8 390.7 47.699999999999996 395.5M51.1 385.9Q52.0 390.7 51.1 395.5"/></g>
<g stroke="#4e8fae" stroke-width="0.95"><circle cx="49.4" cy="416.7" r="5"/><path d="M44.4 414.9H54.4M44.4 418.5H54.4"/><path d="M47.699999999999996 411.9Q46.8 416.7 47.699999999999996 421.5M51.1 411.9Q52.0 416.7 51.1 421.5"/></g>
<g stroke="#4e8fae" stroke-width="0.95"><circle cx="49.4" cy="442.7" r="5"/><path d="M44.4 440.9H54.4M44.4 444.5H54.4"/><path d="M47.699999999999996 437.9Q46.8 442.7 47.699999999999996 447.5M51.1 437.9Q52.0 442.7 51.1 447.5"/></g>
<g stroke="#5a9a82" stroke-width="1.1"><rect x="27.2" y="567.8" width="9.6" height="8.4" rx="0.8"/><path d="M27.2 570.9H36.8M30.4 566.7V568.1M33.6 566.7V568.1"/></g>
<path d="M30.45 621.1V630.6999999999999M33.35 621.1V630.6999999999999M26.9 624.6999999999999H36.9M26.9 627.1H36.9" stroke="#449a7b" stroke-width="1.2"/>
<path d="M30.45 647.1V656.6999999999999M33.35 647.1V656.6999999999999M26.9 650.6999999999999H36.9M26.9 653.1H36.9" stroke="#449a7b" stroke-width="1.2"/>
<path d="M30.45 673.1V682.6999999999999M33.35 673.1V682.6999999999999M26.9 676.6999999999999H36.9M26.9 679.1H36.9" stroke="#449a7b" stroke-width="1.2"/>
<path d="M30.45 699.1V708.6999999999999M33.35 699.1V708.6999999999999M26.9 702.6999999999999H36.9M26.9 705.1H36.9" stroke="#449a7b" stroke-width="1.2"/>
<path d="M30.45 725.1V734.6999999999999M33.35 725.1V734.6999999999999M26.9 728.6999999999999H36.9M26.9 731.1H36.9" stroke="#449a7b" stroke-width="1.2"/>
<path d="M30.45 751.1V760.6999999999999M33.35 751.1V760.6999999999999M26.9 754.6999999999999H36.9M26.9 757.1H36.9" stroke="#449a7b" stroke-width="1.2"/>
<path d="M30.45 777.1V786.6999999999999M33.35 777.1V786.6999999999999M26.9 780.6999999999999H36.9M26.9 783.1H36.9" stroke="#449a7b" stroke-width="1.2"/>
<path d="M22.799999999999997 780.6999999999999H25.7M22.799999999999997 783.1H25.7" stroke="#449a7b" stroke-width="1.05"/>
<path d="M30.45 803.1V812.6999999999999M33.35 803.1V812.6999999999999M26.9 806.6999999999999H36.9M26.9 809.1H36.9" stroke="#449a7b" stroke-width="1.2"/>
<path d="M30.45 829.1V838.6999999999999M33.35 829.1V838.6999999999999M26.9 832.6999999999999H36.9M26.9 835.1H36.9" stroke="#449a7b" stroke-width="1.2"/>
<g stroke="#5ab18c" stroke-width="0.95"><circle cx="31.5" cy="860.4" r="5"/><path d="M26.5 858.6H36.5M26.5 862.1999999999999H36.5"/><path d="M29.8 855.6Q28.9 860.4 29.8 865.1999999999999M33.2 855.6Q34.1 860.4 33.2 865.1999999999999"/></g>
<g stroke="#5ab18c" stroke-width="0.95"><circle cx="31.5" cy="886.4" r="5"/><path d="M26.5 884.6H36.5M26.5 888.1999999999999H36.5"/><path d="M29.8 881.6Q28.9 886.4 29.8 891.1999999999999M33.2 881.6Q34.1 886.4 33.2 891.1999999999999"/></g>
<path d="M30.45 907.1V916.6999999999999M33.35 907.1V916.6999999999999M26.9 910.6999999999999H36.9M26.9 913.1H36.9" stroke="#449a7b" stroke-width="1.2"/>
<path d="M30.45 933.1V942.6999999999999M33.35 933.1V942.6999999999999M26.9 936.6999999999999H36.9M26.9 939.1H36.9" stroke="#449a7b" stroke-width="1.2"/>
<rect x="290.3" y="329.9" width="9.4" height="8.6" stroke="#999" stroke-width="1" fill="#fdfdfd"/><path d="M292.8 333V332H297.2V333M295 332V336.6M294 336.6H296" stroke="#888" stroke-width="0.9"/>
<path d="M439.3 332.25H445.3L442.3 335.75Z" fill="#444" stroke="none"/>
<circle cx="298.7" cy="365.4" r="3.3" fill="#76669c"/>
<circle cx="306.9" cy="365.4" r="3.3" fill="#e7637e"/>
<circle cx="298.7" cy="373.5" r="3.3" fill="#e9996e"/>
<circle cx="306.9" cy="373.5" r="3.3" fill="#6f9bd0"/>
<g stroke="#555" stroke-width="1.2"><circle cx="366.2" cy="368.2" r="6.6"/><circle cx="360.6" cy="372.8" r="3.7" fill="#fcfcfc"/></g>
<rect x="418.6" y="363.4" width="17" height="13.6" stroke="#555" stroke-width="1.3"/><path d="M423.8 368.6V366.8H431.4V368.6M427.6 366.8V373.6M425.8 373.6H429.4" stroke="#555" stroke-width="1.1"/>
<circle cx="302.6" cy="424.7" r="2.7" fill="#666"/><g stroke="#666" stroke-width="1.2"><circle cx="295.6" cy="432.5" r="2.2"/><circle cx="302.7" cy="432.5" r="2.2"/><circle cx="309.75" cy="432.5" r="2.2"/></g>
<path d="M358 421.7H372.2Q373.7 421.7 373.7 423.2V431Q373.7 432.5 372.2 432.5H368.6V436.4L364.2 432.5H358Q356.5 432.5 356.5 431V423.2Q356.5 421.7 358 421.7Z" stroke="#666" stroke-width="1.35" stroke-linejoin="round"/>
<rect x="287.5" y="480.6" width="12" height="11.4" stroke="#666" stroke-width="1" fill="#fdfdfd"/><path d="M290.6 484.6V483.4H296.4V484.6M293.5 483.4V489.4M292.2 489.4H294.8" stroke="#444" stroke-width="1"/>
<g stroke="#555" stroke-width="2"><path d="M478 117.8V125.4M482 117.8V125.4M486 117.8V125.4"/></g><g fill="#555"><rect x="477" y="114" width="2" height="2"/><rect x="481" y="114" width="2" height="2"/><rect x="485" y="114" width="2" height="2"/></g>
<path d="M476 154.4H478M479.6 154.4H488" stroke="#555" stroke-width="1.8"/>
<path d="M476 158.4H478M479.6 158.4H488" stroke="#555" stroke-width="1.8"/>
<path d="M476 162.4H478M479.6 162.4H488" stroke="#555" stroke-width="1.8"/>
<rect x="644.5" y="155.7" width="8.2" height="8.2" stroke="#fff" stroke-width="1.1"/><path d="M646.4 159.8H650.8M648.6 157.6V162" stroke="#fff" stroke-width="1.1"/>
<path d="M888.6 261.6L891.8 265.2L899.4 254.6" stroke="#474f60" stroke-width="2.4"/>
<path d="M888.5 280.8L899.5 291.4M899.5 280.8L888.5 291.4" stroke="#4a5263" stroke-width="2"/>
<path d="M888.8 392.4L892.2 396L899.4 387.6" stroke="#222" stroke-width="1.4"/>
<path d="M1110.3 433.2C1078.4 425.5 1045.2 422.1 1012.4 424.4" stroke="#0a0a0a" stroke-width="2.7" stroke-linecap="round"/>
<path d="M1035.2 417C1027 419.4 1019 421.8 1012 424.4C1011.6 425.4 1011.8 426.6 1012.8 427.6C1020 432 1028 436.4 1035.2 439.8" stroke="#0a0a0a" stroke-width="2.7" stroke-linecap="round" stroke-linejoin="round"/>
<rect x="10.9" y="980.6" width="7.4" height="10.4" rx="1.8" stroke="#666" stroke-width="1.1"/><path d="M10.9 983.2Q14.6 984.8 18.3 983.2" stroke="#666" stroke-width="1"/>
<path d="M894 989.4H888.5V979.6H898.6V985" stroke="#555" stroke-width="1.2"/><path d="M891.6 987V985.8M893.6 987V982.6M895.6 987V984" stroke="#555" stroke-width="1.1"/><path d="M895 990H903M899 986V994" stroke="#555" stroke-width="2"/>
<path d="M926 989.4H920.6V979.6H930.4V985M920.6 984.4H930.4M925.5 979.6V989.4" stroke="#555" stroke-width="1.2"/><path d="M927.1 990H935.1M931.1 986V994" stroke="#555" stroke-width="2"/>
<path d="M952.6 979.6L957.4 981.6L962.2 979.6V985M952.6 979.6V988L957.4 990.4V981.6" stroke="#555" stroke-width="1.2"/><path d="M959 990H967M963 986V994" stroke="#555" stroke-width="2"/>
<circle cx="1513.1" cy="1013.4" r="2.9" stroke="#555" stroke-width="1.1"/><path d="M1508.4 1022.4V1020.6Q1508.4 1018.2 1510.8 1018.2H1515.4Q1517.8 1018.2 1517.8 1020.6V1022.4Z" stroke="#555" stroke-width="1.1"/>
<path d="M1640.75 1015.0H1648.25L1644.5 1019.0Z" fill="#111" stroke="none"/>
<path d="M1788.4 1012.4V1020.6" stroke="#bdbdbd" stroke-width="1.3"/><path d="M1794.4 1012.4L1789.6 1016.5L1794.4 1020.6Z" fill="#bdbdbd"/>
<path d="M1809.6 1012.4L1804.8 1016.5L1809.6 1020.6Z" fill="#bdbdbd"/>
<path d="M1820.4 1012.4L1825.2 1016.5L1820.4 1020.6Z" fill="#bdbdbd"/>
<path d="M1842 1012.4V1020.6" stroke="#bdbdbd" stroke-width="1.3"/><path d="M1836 1012.4L1840.8 1016.5L1836 1020.6Z" fill="#bdbdbd"/>
<rect x="1859.4" y="1011.4" width="2.8" height="2.8" fill="#c4c4c4"/>
<rect x="1859.4" y="1015.4" width="2.8" height="2.8" fill="#c4c4c4"/>
<rect x="1859.4" y="1019.4" width="2.8" height="2.8" fill="#c4c4c4"/>
<rect x="1863.4" y="1011.4" width="2.8" height="2.8" fill="#c4c4c4"/>
<rect x="1863.4" y="1015.4" width="2.8" height="2.8" fill="#c4c4c4"/>
<rect x="1863.4" y="1019.4" width="2.8" height="2.8" fill="#c4c4c4"/>
<rect x="1867.4" y="1011.4" width="2.8" height="2.8" fill="#c4c4c4"/>
<rect x="1867.4" y="1015.4" width="2.8" height="2.8" fill="#c4c4c4"/>
<rect x="1867.4" y="1019.4" width="2.8" height="2.8" fill="#c4c4c4"/>
<rect x="1881" y="1011.4" width="11" height="6.6" fill="#c4c4c4"/>
<rect x="1881.0" y="1019.6" width="2.8" height="2.8" fill="#c4c4c4"/>
<rect x="1885.1" y="1019.6" width="2.8" height="2.8" fill="#c4c4c4"/>
<rect x="1889.2" y="1019.6" width="2.8" height="2.8" fill="#c4c4c4"/>
<rect x="1903" y="1011.2" width="11" height="11" fill="#666"/>
</svg>
<div class="t" style="left:23.8px;top:459.0px;font-size:9.5px;font-weight:bold;color:#4a819d;letter-spacing:-0.55px">Abc</div>
<div class="t" style="left:23.8px;top:485.0px;font-size:9.5px;font-weight:bold;color:#4a819d;letter-spacing:-0.55px">Abc</div>
<div class="t" style="left:23.8px;top:511.0px;font-size:9.5px;font-weight:bold;color:#4a819d;letter-spacing:-0.55px">Abc</div>
<div class="t" style="left:23.8px;top:537.0px;font-size:9.5px;font-weight:bold;color:#4a819d;letter-spacing:-0.55px">Abc</div>
<div class="t" style="left:23.8px;top:589.0px;font-size:9.5px;font-weight:bold;color:#4a819d;letter-spacing:-0.55px">Abc</div>
</body></html>
